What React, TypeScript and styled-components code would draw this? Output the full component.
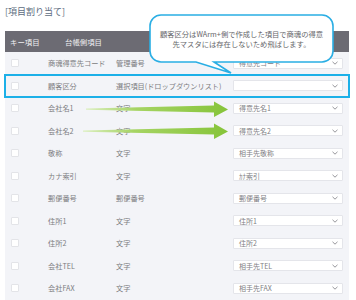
import React from 'react';
import styled, { createGlobalStyle } from 'styled-components';

const GlobalStyle = createGlobalStyle`
  html, body {
    margin: 0;
    padding: 0;
    background: #ffffff;
  }
  body {
    font-family: "Noto Sans CJK JP", "Noto Sans", sans-serif;
  }
`;

interface Field {
  name: string
  kind: string
  target: string
  selected?: boolean
}

const fields: Field[] = [
  { name: '商魂得意先コード', kind: '管理番号', target: '得意先コード' },
  { name: '顧客区分', kind: '選択項目(ドロップダウンリスト)', target: '', selected: true },
  { name: '会社名1', kind: '文字', target: '得意先名1' },
  { name: '会社名2', kind: '文字', target: '得意先名2' },
  { name: '敬称', kind: '文字', target: '相手先敬称' },
  { name: 'カナ索引', kind: '文字', target: 'ｶﾅ索引' },
  { name: '郵便番号', kind: '郵便番号', target: '郵便番号' },
  { name: '住所1', kind: '文字', target: '住所1' },
  { name: '住所2', kind: '文字', target: '住所2' },
  { name: '会社TEL', kind: '文字', target: '相手先TEL' },
  { name: '会社FAX', kind: '文字', target: '相手先FAX' },
];

const Page = styled.div`
  position: relative;
  width: 356px;
  height: 300px;
  overflow: hidden;
  padding: 6px 0 0 5px;
  box-sizing: border-box;
`;

const Title = styled.div`
  font-size: 9px;
  line-height: 12px;
  color: #5d6c7e;
  height: 25px;
`;

const Table = styled.div`
  width: 344px;
  background: #f3f4f8;
`;

const Header = styled.div`
  display: grid;
  grid-template-columns: 55px 1fr;
  align-items: center;
  height: 21px;
  background: #6c6b73;
  color: #efeff2;
  font-size: 7.4px;
  padding-left: 5px;
`;

const Row = styled.div<{ $selected?: boolean }>`
  display: grid;
  grid-template-columns: 43px 68px 117px 110px;
  align-items: center;
  height: 22.5px;
  color: #7c7c80;
  font-size: 7.2px;
  white-space: nowrap;
  outline: ${p => (p.$selected ? '2px solid #1cb0e8' : 'none')};
  outline-offset: -1px;
  position: relative;
`;

const Check = styled.span`
  width: 8px;
  height: 8px;
  margin-left: 6px;
  background: #ffffff;
  border: 1px solid #e3e4e8;
  border-radius: 1px;
  box-sizing: border-box;
`;

const Select = styled.div`
  display: flex;
  align-items: center;
  justify-content: space-between;
  height: 11px;
  background: #ffffff;
  border: 1px solid #e4e5ea;
  border-radius: 1px;
  box-sizing: border-box;
  padding: 0 4px 0 5px;
  color: #808084;
  font-size: 7px;
`;

const Overlay = styled.svg`
  position: absolute;
  left: 0;
  top: 0;
  pointer-events: none;
`;

const Bubble = styled.div`
  position: absolute;
  left: 150px;
  top: 15px;
  width: 183px;
  height: 47px;
  display: flex;
  align-items: center;
  justify-content: center;
  text-align: center;
  font-size: 7.3px;
  line-height: 10px;
  color: #66666a;
  white-space: nowrap;
`;

const Chevron = () => (
  <svg width="6" height="4" viewBox="0 0 6 4">
    <polyline points="0.5,0.8 3,3.2 5.5,0.8" fill="none" stroke="#8a8a90" strokeWidth="0.9" />
  </svg>
);

const arrow = (y: number, x0: number) =>
  `${x0},${y} 214,${y - 3} 214,${y - 7} 228,${y + 1} 214,${y + 8.5} 214,${y + 4} ${x0},${y + 1.2}`;

const App = () => (
  <Page>
    <GlobalStyle />
    <Title>[項目割り当て]</Title>
    <Table>
      <Header>
        <span>キー項目</span>
        <span>台帳側項目</span>
      </Header>
      {fields.map(f => (
        <Row key={f.name} $selected={f.selected}>
          <Check />
          <span>{f.name}</span>
          <span>{f.kind}</span>
          <Select>
            <span>{f.target}</span>
            <Chevron />
          </Select>
        </Row>
      ))}
    </Table>

    <Overlay width="356" height="300" viewBox="0 0 356 300">
      <defs>
        <linearGradient id="green" x1="0" y1="0" x2="1" y2="0">
          <stop offset="0" stopColor="#dcefc0" />
          <stop offset="0.35" stopColor="#a6d464" />
          <stop offset="1" stopColor="#86c43a" />
        </linearGradient>
      </defs>
      <polygon points={arrow(108.5, 86)} fill="url(#green)" />
      <polygon points={arrow(130.5, 83)} fill="url(#green)" />
      <path
        d="M161,15 H322 A11,11 0 0 1 333,26 V51 A11,11 0 0 1 322,62 H214 L231,73 L196,62 H161 A11,11 0 0 1 150,51 V26 A11,11 0 0 1 161,15 Z"
        fill="#ffffff"
        stroke="#2aaee4"
        strokeWidth="1.6"
      />
    </Overlay>
    <Bubble>
      <span>
        顧客区分はWArm+側で作成した項目で商魂の得意
        <br />
        先マスタには存在しないため飛ばします。
      </span>
    </Bubble>
  </Page>
);

export default App;
